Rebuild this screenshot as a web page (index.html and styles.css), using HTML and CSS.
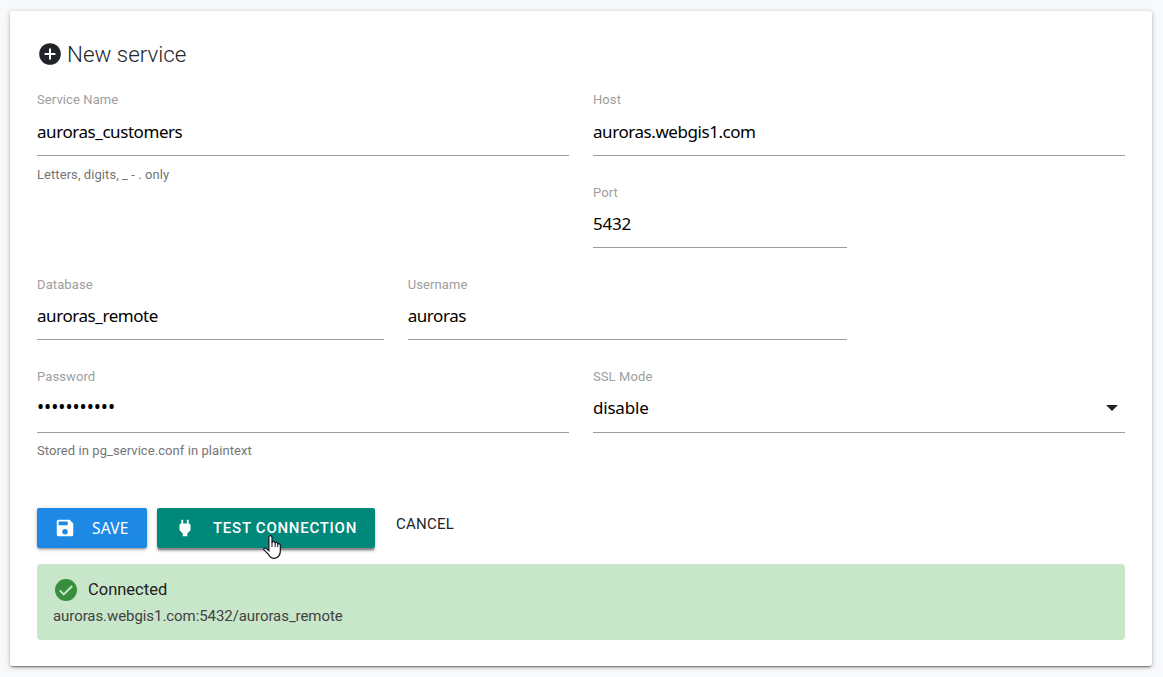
FILE: index.html
```html
<!DOCTYPE html>
<html lang="en">
<head>
<meta charset="utf-8">
<title>New service</title>
<link rel="stylesheet" href="styles.css">
</head>
<body>
<main class="card">
  <h1 class="title">
    <svg class="title-icon" viewBox="0 0 22 22"><circle cx="11" cy="11" r="10.8" fill="#212529"/><path d="M11 5.6v10.8M5.6 11h10.8" stroke="#fff" stroke-width="2"/></svg>
    <span>New service</span>
  </h1>
  <form class="fields">
    <div class="field half"><label class="label">Service Name</label><div class="value">auroras_customers</div><div class="helper">Letters, digits, _ - . only</div></div>
    <div class="field half"><label class="label">Host</label><div class="value">auroras.webgis1.com</div></div>
    <div class="field quarter port"><label class="label">Port</label><div class="value number">5432</div></div>
    <div class="field third"><label class="label">Database</label><div class="value">auroras_remote</div></div>
    <div class="field five"><label class="label">Username</label><div class="value">auroras</div></div>
    <div class="field half last"><label class="label">Password</label><div class="value password">•••••••••••</div><div class="helper">Stored in pg_service.conf in plaintext</div></div>
    <div class="field half last"><label class="label">SSL Mode</label><div class="value select"><span>disable</span><svg class="caret" viewBox="0 0 12 6"><path d="M0 0h12L6 6z" fill="#212121"/></svg></div></div>
  </form>
  <div class="actions">
    <button class="btn save" type="button">
      <svg class="btn-icon" viewBox="0 0 24 24"><path fill="#fff" d="M15 9H5V5h10m-3 14a3 3 0 1 1 0-6 3 3 0 0 1 0 6m5-16H5a2 2 0 0 0-2 2v14a2 2 0 0 0 2 2h14a2 2 0 0 0 2-2V7l-4-4z"/></svg>
      <span>SAVE</span>
    </button>
    <button class="btn test" type="button">
      <svg class="btn-icon" viewBox="0 0 24 24"><path fill="#fff" d="M16 7V3h-2v4h-4V3H8v4c-1.1 0-2 .9-2 2v5.5L9.5 18v3h5v-3l3.500-3.500V9c0-1.100-.9-2-2-2z"/></svg>
      <span>TEST CONNECTION</span>
      <svg class="cursor" viewBox="0 0 17 23"><path d="M5.500 13V2.300Q5.500.7 7 .7T8.500 2.300V7.500Q8.700 6 10 6T11.500 7.500V8.200Q11.700 7 12.900 7T14 8.300V9.200Q14.200 8.300 15.200 8.300T16.500 9.800V15C16.500 18 15 22.400 10.800 22.400 7.200 22.400 5.800 20.300 4.700 18L.8 14.300C.1 12.900 1.700 12 3.100 12.900L5.500 15z" fill="#fff" stroke="#171727" stroke-width="1.200"/><path d="M8.500 7v4.500M11.500 8v3.500M14 9v2.500" stroke="#171727" stroke-width="1"/></svg>
    </button>
    <a class="cancel">CANCEL</a>
  </div>
  <section class="result">
    <div class="result-title">
      <svg class="check" viewBox="0 0 22 22"><circle cx="11" cy="11" r="11" fill="#388e3c"/><path d="M4.700 11.400l4.100 4L17.200 7" fill="none" stroke="#c8e6c9" stroke-width="2"/></svg>
      <span>Connected</span>
    </div>
    <div class="result-detail">auroras.webgis1.com:5432/auroras_remote</div>
  </section>
</main>
</body>
</html>
```
FILE: styles.css
```css
* { box-sizing: border-box; }
body {
  margin: 0;
  padding: 11px 11px 11px 10px;
  height: 677px;
  overflow: hidden;
  background: #f8f9fb;
  color: #212529;
  font-family: Roboto, sans-serif;
}
.card {
  height: 655px;
  padding: 29px 27px 0;
  background: #fff;
  border-radius: 3px;
  box-shadow: 0 2px 2px rgba(0,0,0,.14), 0 3px 1px -2px rgba(0,0,0,.3), 0 1px 5px rgba(0,0,0,.25);
}
.title {
  display: flex;
  align-items: center;
  height: 28px;
  margin: 0 0 24px;
  padding-left: 2px;
  gap: 6px;
  font-size: 22.400px;
  font-weight: 300;
  line-height: 28px;
}
.title-icon { width: 22px; height: 22px; }
.fields {
  display: grid;
  grid-template-columns: repeat(12, 1fr);
  grid-template-rows: 92px 92px 92px 93px;
  column-gap: 24px;
}
.half { grid-column: span 6; }
.quarter { grid-column: span 3; }
.port { grid-column: 7 / span 3; }
.third { grid-column: 1 / span 4; }
.five { grid-column: span 5; }
.label {
  display: block;
  height: 16px;
  color: #9e9e9e;
  font-size: 13px;
  letter-spacing: .1px;
  line-height: 16px;
}
.port .label, .third .label, .five .label, .last .label { line-height: 18px; }
.value {
  height: 48px;
  border-bottom: 1px solid #9e9e9e;
  color: #000;
  font-family: "Noto Sans", sans-serif;
  font-size: 17px;
  letter-spacing: -.44px;
  line-height: 47px;
}
.number { letter-spacing: -.2px; }
.password { font-size: 19px; letter-spacing: -.05px; }
.last .value { height: 49px; }
.helper {
  margin-top: 11px;
  color: #757575;
  font-size: 13px;
  letter-spacing: .07px;
  line-height: 16px;
}
.last .helper { margin-top: 10px; }
.select {
  display: flex;
  justify-content: space-between;
  letter-spacing: -.2px;
  padding-right: 7px;
}
.caret { width: 12px; height: 6px; margin-top: 21px; }
.actions {
  display: flex;
  height: 56px;
  margin-top: 47px;
}
.btn {
  display: flex;
  align-items: center;
  position: relative;
  height: 40px;
  border: 0;
  border-radius: 2px;
  color: #fff;
  box-shadow: 0 2px 2px rgba(0,0,0,.14), 0 3px 1px -2px rgba(0,0,0,.12), 0 1px 5px rgba(0,0,0,.2);
}
.btn-icon { width: 22px; height: 22px; }
.save {
  width: 110px;
  margin-right: 10px;
  padding: 0 0 0 17px;
  gap: 16px;
  background: #1e88e5;
  font: 15.500px "Noto Sans", sans-serif;
  letter-spacing: .2px;
}
.test {
  width: 218px;
  padding: 0 0 0 17px;
  gap: 17px;
  background: #00897b;
  font: 500 15px Roboto, sans-serif;
  letter-spacing: .73px;
  box-shadow: 0 3px 3px rgba(0,0,0,.3), 0 3px 1px -1px rgba(0,0,0,.25);
}
.test span { white-space: nowrap; }
.cursor {
  position: absolute;
  left: 106px;
  top: 27px;
  width: 18px;
  height: 24px;
}
.cancel {
  margin-left: 21px;
  font-size: 15px;
  letter-spacing: .25px;
  line-height: 32px;
}
.result {
  height: 76px;
  padding: 14px 16px;
  border-radius: 4px;
  background: #c8e6c9;
}
.result-title {
  display: flex;
  align-items: center;
  height: 23px;
  padding-left: 2px;
  gap: 11px;
  font-size: 16.500px;
  color: #212121;
}
.check { width: 22px; height: 22px; }
.result-detail {
  margin-top: 5px;
  color: #424242;
  font-size: 15px;
  letter-spacing: -.07px;
  line-height: 20px;
}
```
